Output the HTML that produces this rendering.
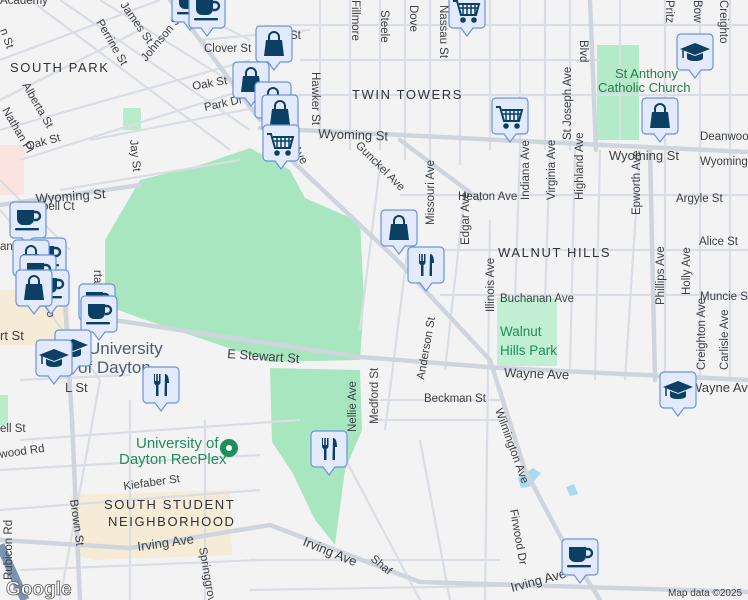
<!DOCTYPE html>
<html><head><meta charset="utf-8"><style>
html,body{margin:0;padding:0;width:748px;height:600px;overflow:hidden;background:#f4f3f4}
svg{display:block}
text{font-family:"Liberation Sans",Arial,sans-serif;fill:#3c4043;font-size:11.5px}
.n{font-size:13px;letter-spacing:1.6px;fill:#2f3336}
.g{fill:#1e8e5a;font-size:15px}
.u{fill:#4c5d78;font-size:17px}
.big{font-size:13px}
</style></head><body>
<svg width="748" height="600" viewBox="0 0 748 600" xmlns="http://www.w3.org/2000/svg">
<defs>
<g id="pin">
<path d="M4 0h28a4 4 0 0 1 4 4v28a4 4 0 0 1-4 4h-8l-6 8-6-8h-8a4 4 0 0 1-4-4V4a4 4 0 0 1 4-4z" fill="#e2eafb" stroke="#6a93dc" stroke-width="1.2"/>
</g>
<g id="cup" fill="#0b4064"><use href="#pin"/><path d="M7 8h17v9a6 6 0 0 1-6 6h-5a6 6 0 0 1-6-6z"/><path d="M24 10h2a4 4 0 0 1 0 8h-2" fill="none" stroke="#0b4064" stroke-width="2.4"/><rect x="5" y="26" width="24" height="2.4" rx="1"/></g>
<g id="bag" fill="#0b4064"><use href="#pin"/><path d="M10 14h16l2 16H8z"/><path d="M13 15v-4a5 5 0 0 1 10 0v4" fill="none" stroke="#0b4064" stroke-width="2"/></g>
<g id="cart" fill="none" stroke="#0b4064" stroke-width="2"><use href="#pin"/><path d="M4 9h4l4 14h15l3-11H10"/><path d="M11 16h18M14 12v10M18 12v10M22 12v10M26 12v10" stroke-width="1.5"/><circle cx="14" cy="28" r="1.8" fill="#0b4064"/><circle cx="25" cy="28" r="1.8" fill="#0b4064"/></g>
<g id="fork" fill="#0b4064"><use href="#pin"/><path d="M11 7v8a3 3 0 0 0 2 3v11h2.5V18a3 3 0 0 0 2-3V7h-1.5v7h-1.2V7h-1.600v7H12V7z"/><path d="M22 7c3 0 4 4 4 9h-2v13h-2.5z"/></g>
<g id="cap" fill="#0b4064"><use href="#pin"/><path d="M3 15l15-6 15 6-15 6z"/><path d="M10 19v5c0 2 4 3 8 3s8-1 8-3v-5l-8 3z"/><path d="M6 16v8" stroke="#0b4064" stroke-width="1.5"/></g>
</defs>

<rect x="0" y="145" width="24" height="50" fill="#fbe4df"/>
<rect x="0" y="290" width="70" height="55" fill="#f6ebd7"/>
<path d="M70 495L230 490L232 555L95 560L75 555z" fill="#f6ebd7"/>
<path d="M105 240L140 180L200 165L250 148L290 170L305 198L360 222L364 300L360 360L270 362L140 318L105 305z" fill="#a8e6c0"/>
<path d="M270 368L360 370L362 430L345 470L335 545L315 520L292 472L272 442z" fill="#a8e6c0"/>
<rect x="497" y="298" width="60" height="68" fill="#c2efd3"/>
<rect x="597" y="45" width="42" height="95" fill="#b3ebc8"/>
<rect x="123" y="108" width="18" height="22" fill="#b8ecca"/>
<rect x="0" y="395" width="8" height="30" fill="#b8ecca"/>
<path d="M518 478l15-10 8 5-12 14-8 1z" fill="#aadaf2"/>
<path d="M566 487l8-3 4 10-8 2z" fill="#aadaf2"/>

<g stroke="#d9dde4" stroke-width="2.2" fill="none">
<path d="M0 60L160 0M0 100L140 30M30 0L230 150M60 0L250 130M100 0L260 100M0 210L60 280M0 180L70 250"/>
<path d="M0 130L250 60M20 160L260 85M90 140L270 105M60 190L240 160"/>
<path d="M320 0V140M350 0V150M380 0V150M405 0V160M430 0V175M460 0V165M490 0V150M520 0V150M545 0V150M570 0V150M665 0V380M620 0V140M700 0V380M730 0V380"/>
<path d="M290 25H748M300 60H600M290 95H748M400 195H748M420 250H748M440 295H748M380 400H500M370 420H500"/>
<path d="M380 165L360 330M410 230L385 430M465 190L445 370M490 220L485 600M520 150L515 300M550 150L545 300M575 150L570 370M640 150L625 380M600 150L595 380"/>
<path d="M20 380L130 375M20 440L300 420M0 470L260 455M0 510L260 490M20 570L260 560M130 400V600M205 420V600M330 430L420 600M420 440L450 600M250 560L500 560M250 590L560 585"/>
<path d="M170 0L250 40M200 40L310 30M40 300L100 380M100 380L60 600"/>
</g>
<g stroke="#cfd5dd" stroke-width="4.5" fill="none" stroke-linecap="round">
<path d="M0 205L140 185M260 128L500 140L748 152"/>
<path d="M270 140L395 258L490 360L525 470L565 545L600 600"/>
<path d="M100 318L360 357L500 368L748 380"/>
<path d="M0 540L130 548L270 525L420 582L748 592"/>
<path d="M65 300L72 420L80 600"/>
<path d="M590 0L596 150M650 150L655 380M170 0L260 120M400 140L480 200"/>
</g>
<path d="M0 545L25 600" stroke="#7d93b3" stroke-width="9"/>

<text x="10" y="72" class="n">SOUTH PARK</text>
<text x="352" y="99" class="n">TWIN TOWERS</text>
<text x="498" y="257" class="n">WALNUT HILLS</text>
<text x="104" y="509" class="n">SOUTH STUDENT</text>
<text x="108" y="526" class="n">NEIGHBORHOOD</text>
<text x="36" y="203" class="big" transform="rotate(-4 36 203)">Wyoming St</text>
<text x="318" y="138" class="big" transform="rotate(2 318 138)">Wyoming St</text>
<text x="609" y="160" class="big">Wyoming St</text>
<text x="700" y="165">Wyoming</text>
<text x="227" y="358" class="big" transform="rotate(4 227 358)">E Stewart St</text>
<text x="504" y="377" class="big" transform="rotate(2 504 377)">Wayne Ave</text>
<text x="690" y="392" class="big">Wayne Ave</text>
<text x="138" y="551" class="big" transform="rotate(-8 138 551)">Irving Ave</text>
<text x="302" y="545" class="big" transform="rotate(22 302 545)">Irving Ave</text>
<text x="512" y="592" class="big" transform="rotate(-15 512 592)">Irving Ave</text>
<text x="0" y="340" class="big">rt St</text>
<text x="42" y="210">bell Ct</text>
<text x="65" y="392" class="big">L St</text>
<text x="0" y="432">ell St</text>
<text x="0" y="458" transform="rotate(-8 0 458)">wood Rd</text>
<text x="124" y="490" transform="rotate(-8 124 490)">Kiefaber St</text>
<text x="458" y="200">Heaton Ave</text>
<text x="676" y="202">Argyle St</text>
<text x="699" y="245">Alice St</text>
<text x="700" y="300">Muncie St</text>
<text x="700" y="140">Deanwood</text>
<text x="204" y="52">Clover St</text>
<text x="290" y="39">St</text>
<text x="193" y="90" transform="rotate(-10 193 90)">Oak St</text>
<text x="205" y="111" transform="rotate(-12 205 111)">Park Dr</text>
<text x="27" y="150" transform="rotate(-15 27 150)">Oak St</text>
<text x="500" y="302">Buchanan Ave</text>
<text x="424" y="402">Beckman St</text>
<text x="500" y="336" class="g" style="font-size:13.5px">Walnut</text>
<text x="500" y="355" class="g" style="font-size:13.5px">Hills Park</text>
<text x="615" y="78" class="big" style="fill:#2a7a4f">St Anthony</text>
<text x="598" y="92" class="big" style="fill:#2a7a4f">Catholic Church</text>
<text x="136" y="448" class="g">University of</text>
<text x="119" y="464" class="g">Dayton RecPlex</text>
<circle cx="229" cy="448" r="9" fill="#1e8e5a"/><circle cx="229" cy="448" r="3" fill="#fff"/>
<text x="88" y="354" class="u">University</text>
<text x="78" y="373" class="u">of Dayton</text>
<text x="0" y="250">ank</text>
<g>
<text transform="translate(312 72) rotate(90)">Hawker St</text>
<text transform="translate(352 0) rotate(90)">Fillmore</text>
<text transform="translate(381 10) rotate(90)">Steele</text>
<text transform="translate(410 5) rotate(90)">Dove</text>
<text transform="translate(440 5) rotate(90)">Nassau St</text>
<text transform="translate(292 148) rotate(60)">Ave</text>
<text transform="translate(355 146) rotate(45)">Gunckel Ave</text>
<text transform="translate(434 225) rotate(-90)">Missouri Ave</text>
<text transform="translate(469 245) rotate(-90)">Edgar Ave</text>
<text transform="translate(494 312) rotate(-90)">Illinois Ave</text>
<text transform="translate(529 200) rotate(-90)">Indiana Ave</text>
<text transform="translate(555 200) rotate(-90)">Virginia Ave</text>
<text transform="translate(571 140) rotate(-90)">St Joseph Ave</text>
<text transform="translate(583 200) rotate(-90)">Highland Ave</text>
<text transform="translate(640 215) rotate(-90)">Epworth Ave</text>
<text transform="translate(664 305) rotate(-90)">Phillips Ave</text>
<text transform="translate(690 295) rotate(-90)">Holly Ave</text>
<text transform="translate(705 370) rotate(-90)">Creighton Ave</text>
<text transform="translate(728 370) rotate(-90)">Carlisle Ave</text>
<text transform="translate(580 40) rotate(90)">Blvd</text>
<text transform="translate(694 0) rotate(90)">Bow</text>
<text transform="translate(666 0) rotate(90)">Pritz</text>
<text transform="translate(720 0) rotate(90)">Creighto</text>
<text transform="translate(424 380) rotate(-80)">Anderson St</text>
<text transform="translate(378 424) rotate(-90)">Medford St</text>
<text transform="translate(356 432) rotate(-90)">Nellie Ave</text>
<text transform="translate(495 410) rotate(70)">Wilmington Ave</text>
<text transform="translate(510 510) rotate(80)">Firwood Dr</text>
<text transform="translate(199 548) rotate(80)">Springgrov</text>
<text transform="translate(70 500) rotate(82)">Brown St</text>
<text transform="translate(45 300) rotate(82)">Bro</text>
<text transform="translate(12 580) rotate(-90)">Rubicon Rd</text>
<text transform="translate(94 270) rotate(90)">rta St</text>
<text transform="translate(130 140) rotate(84)">Jay St</text>
<text transform="translate(2 110) rotate(60)">Nathan Pl</text>
<text transform="translate(22 85) rotate(60)">Alberta St</text>
<text transform="translate(96 22) rotate(60)">Perrine St</text>
<text transform="translate(120 5) rotate(55)">James St</text>
<text transform="translate(146 62) rotate(-50)">Johnson St</text>
<text transform="translate(0 30) rotate(70)">n St</text>
<text transform="translate(370 560) rotate(40)">Shaf</text>
</g>
<text x="0" y="0" dy="4">Academy</text>

<use href="#cup" x="172" y="-14"/>
<use href="#cup" x="189" y="-8"/>
<use href="#cart" x="449" y="-8"/>
<use href="#bag" x="256" y="26"/>
<use href="#bag" x="233" y="62"/>
<use href="#bag" x="255" y="82"/>
<use href="#bag" x="262" y="95"/>
<use href="#cart" x="263" y="125"/>
<use href="#cart" x="492" y="98"/>
<use href="#cap" x="677" y="34"/>
<use href="#bag" x="642" y="98"/>
<use href="#bag" x="381" y="210"/>
<use href="#fork" x="408" y="247"/>
<use href="#cup" x="10" y="202"/>
<use href="#cup" x="30" y="238"/>
<use href="#bag" x="13" y="240"/>
<use href="#cup" x="20" y="255"/>
<use href="#cup" x="33" y="270"/>
<use href="#bag" x="16" y="270"/>
<use href="#cup" x="79" y="284"/>
<use href="#cup" x="81" y="296"/>
<use href="#cap" x="55" y="330"/>
<use href="#cap" x="36" y="340"/>
<use href="#fork" x="143" y="367"/>
<use href="#fork" x="311" y="431"/>
<use href="#cap" x="660" y="372"/>
<use href="#cup" x="562" y="539"/>

<text x="6" y="595" style="font-size:19px;font-weight:bold;fill:#fff;stroke:#555;stroke-width:0.8">Google</text>
<text x="668" y="596" style="font-size:10px;fill:#3c4043">Map data ©2025</text>
</svg>
</body></html>
